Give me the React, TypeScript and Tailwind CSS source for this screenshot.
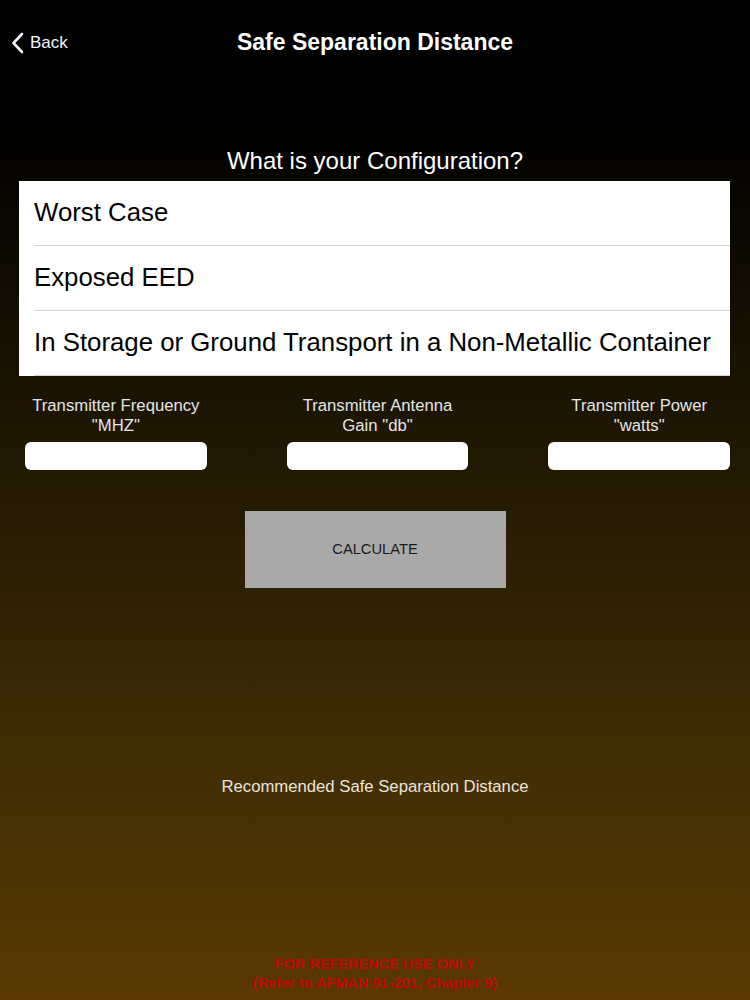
const configurations = [
  'Worst Case',
  'Exposed EED',
  'In Storage or Ground Transport in a Non-Metallic Container',
];

const fields = [
  { line1: 'Transmitter Frequency', line2: '"MHZ"' },
  { line1: 'Transmitter Antenna', line2: 'Gain "db"' },
  { line1: 'Transmitter Power', line2: '"watts"' },
];

export default function App() {
  return (
    <div
      className="flex h-[1000px] w-[750px] flex-col bg-[linear-gradient(to_bottom,#000000_0%,#000000_11%,#1a1303_38%,#2f2203_60%,#443006_80%,#5a3900_100%)] text-white"
      style={{ fontFamily: '"Liberation Sans", Arial, sans-serif' }}
    >
      {/* Nav bar */}
      <header className="relative flex h-[84px] items-center justify-center">
        <button className="absolute left-[11px] top-[30px] flex items-center gap-[6px] text-[17px] text-gray-100">
          <svg width="13" height="22" viewBox="0 0 13 22" fill="none">
            <path d="M11 2 L2.5 11 L11 20" stroke="currentColor" strokeWidth="2.6" strokeLinecap="round" strokeLinejoin="round" />
          </svg>
          <span>Back</span>
        </button>
        <h1 className="text-[23px] font-bold">Safe Separation Distance</h1>
      </header>

      <p className="mt-[62px] text-center text-[24px] leading-[30px]">What is your Configuration?</p>

      {/* Configuration list */}
      <ul className="mx-[19px] mt-[5px] mr-[20px] bg-white text-black">
        {configurations.map((c) => (
          <li key={c} className="ml-[15px] flex h-[65px] items-center border-b border-[#d4d4d4] pb-[1px] text-[25.8px]">
            {c}
          </li>
        ))}
      </ul>

      {/* Inputs */}
      <div className="mt-[20px] grid grid-cols-3 gap-x-[80px] px-[25px] pr-[20px]">
        {fields.map((f) => (
          <div key={f.line1} className="flex flex-col items-center">
            <div className="text-center text-[16.7px] leading-[20px] text-[#e4e4e4]">
              <div>{f.line1}</div>
              <div>{f.line2}</div>
            </div>
            <input className="mt-[6px] h-[28px] w-full rounded-[6px] bg-white outline-none" />
          </div>
        ))}
      </div>

      <div className="mt-[41px] flex justify-center">
        <button className="flex h-[77px] w-[261px] items-center justify-center bg-[#a9a9a9] text-[14.7px] text-[#1a1a1a]">
          CALCULATE
        </button>
      </div>

      <p className="mt-[186px] text-center text-[16.7px] text-[#ebe4d8]">Recommended Safe Separation Distance</p>

      <div className="mt-auto mb-[7px] text-center text-[14.5px] font-bold leading-[19px] text-[#bf0a0a]">
        <div>FOR REFERENCE USE ONLY</div>
        <div>(Refer to AFMAN 91-201, Chapter 9)</div>
      </div>
    </div>
  );
}
